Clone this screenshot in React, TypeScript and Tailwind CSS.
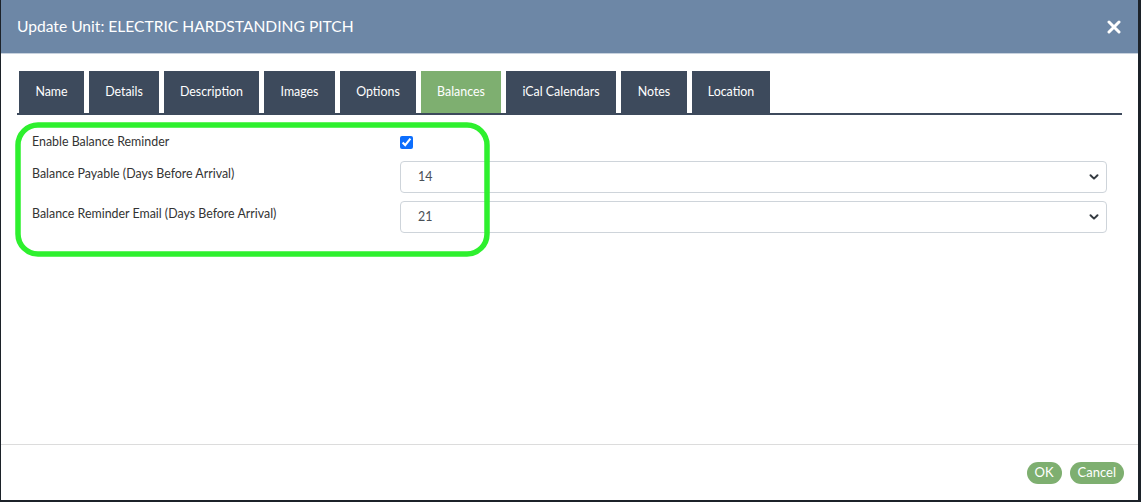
import { useState } from "react";

const TABS = [
  "Name",
  "Details",
  "Description",
  "Images",
  "Options",
  "Balances",
  "iCal Calendars",
  "Notes",
  "Location",
];

const TAB_W: Record<string, string> = {
  Name: "w-[65px]",
  Details: "w-[70px]",
  Description: "w-[95px]",
  Images: "w-[71px]",
  Options: "w-[76px]",
  Balances: "w-[80px]",
  "iCal Calendars": "w-[110px]",
  Notes: "w-[66px]",
  Location: "w-[78px]",
};

function Chevron() {
  return (
    <svg width="10" height="8" viewBox="0 0 10 8" className="text-[#343a40]">
      <path d="M1.5 2.2 L5 5.6 L8.5 2.2" fill="none" stroke="currentColor" strokeWidth="2" strokeLinecap="round" strokeLinejoin="round" />
    </svg>
  );
}

function Select({ value }: { value: string }) {
  return (
    <div className="flex h-[32px] flex-1 items-center justify-between rounded-[4px] border border-[#ced4da] bg-white pl-[17px] pr-[7px] text-[12.4px] text-[#495057]">
      <span>{value}</span>
      <Chevron />
    </div>
  );
}

export default function App() {
  const [active] = useState("Balances");

  return (
    <div className="h-[502px] w-[1141px] bg-[#1c2229] pl-px pr-[3px] pb-[2px] font-['Lato','Noto_Sans',sans-serif]">
      <div className="flex h-full flex-col bg-white">
        <div className="flex h-[54px] items-center justify-between border-b border-[#c8d2de] bg-[#6d87a6] pl-[16px] pr-[17px]">
          <h1 className="text-[15.6px] text-white">Update Unit: ELECTRIC HARDSTANDING PITCH</h1>
          <svg width="14" height="14" viewBox="0 0 14 14">
            <path d="M2 2 L12 12 M12 2 L2 12" stroke="white" strokeWidth="3" strokeLinecap="round" />
          </svg>
        </div>

        <div className="flex-1 px-[16px] pt-[17px]">
          <div className="flex gap-[5px] border-b-2 border-[#3d4a5c] pl-[2px]">
            {TABS.map((t) => (
              <div
                key={t}
                className={`${TAB_W[t]} flex h-[42px] items-center justify-center text-[12.4px] text-white ${
                  t === active ? "bg-[#7eaf70]" : "bg-[#3d4a5c]"
                }`}
              >
                {t}
              </div>
            ))}
          </div>

          <div className="relative pt-[15px] text-[12.4px] text-[#333]">
            <div className="flex h-[24px] items-center pl-[15px]">
              <span className="w-[368px]">Enable Balance Reminder</span>
              <input type="checkbox" defaultChecked className="h-[13px] w-[13px] accent-[#0d6efd]" />
            </div>
            <div className="mt-[7px] flex items-start pl-[15px] pr-[15px]">
              <span className="w-[368px] pt-[4px]">Balance Payable (Days Before Arrival)</span>
              <Select value="14" />
            </div>
            <div className="mt-[8px] flex items-start pl-[15px] pr-[15px]">
              <span className="w-[368px] pt-[4px]">Balance Reminder Email (Days Before Arrival)</span>
              <Select value="21" />
            </div>

            <svg className="pointer-events-none absolute left-[-2px] top-[7px]" width="478" height="138" viewBox="0 0 478 138">
              <rect x="3" y="3" width="469" height="129" rx="20" fill="none" stroke="#2ef02e" strokeWidth="5.5" />
            </svg>
          </div>
        </div>

        <div className="flex h-[56px] items-center justify-end gap-[8px] border-t border-[#dcdcdc] pr-[14px]">
          <button className="h-[22px] rounded-full bg-[#7eaf70] px-[8px] text-[13px] text-white">OK</button>
          <button className="h-[22px] rounded-full bg-[#7eaf70] px-[8px] text-[13px] text-white">Cancel</button>
        </div>
      </div>
    </div>
  );
}
